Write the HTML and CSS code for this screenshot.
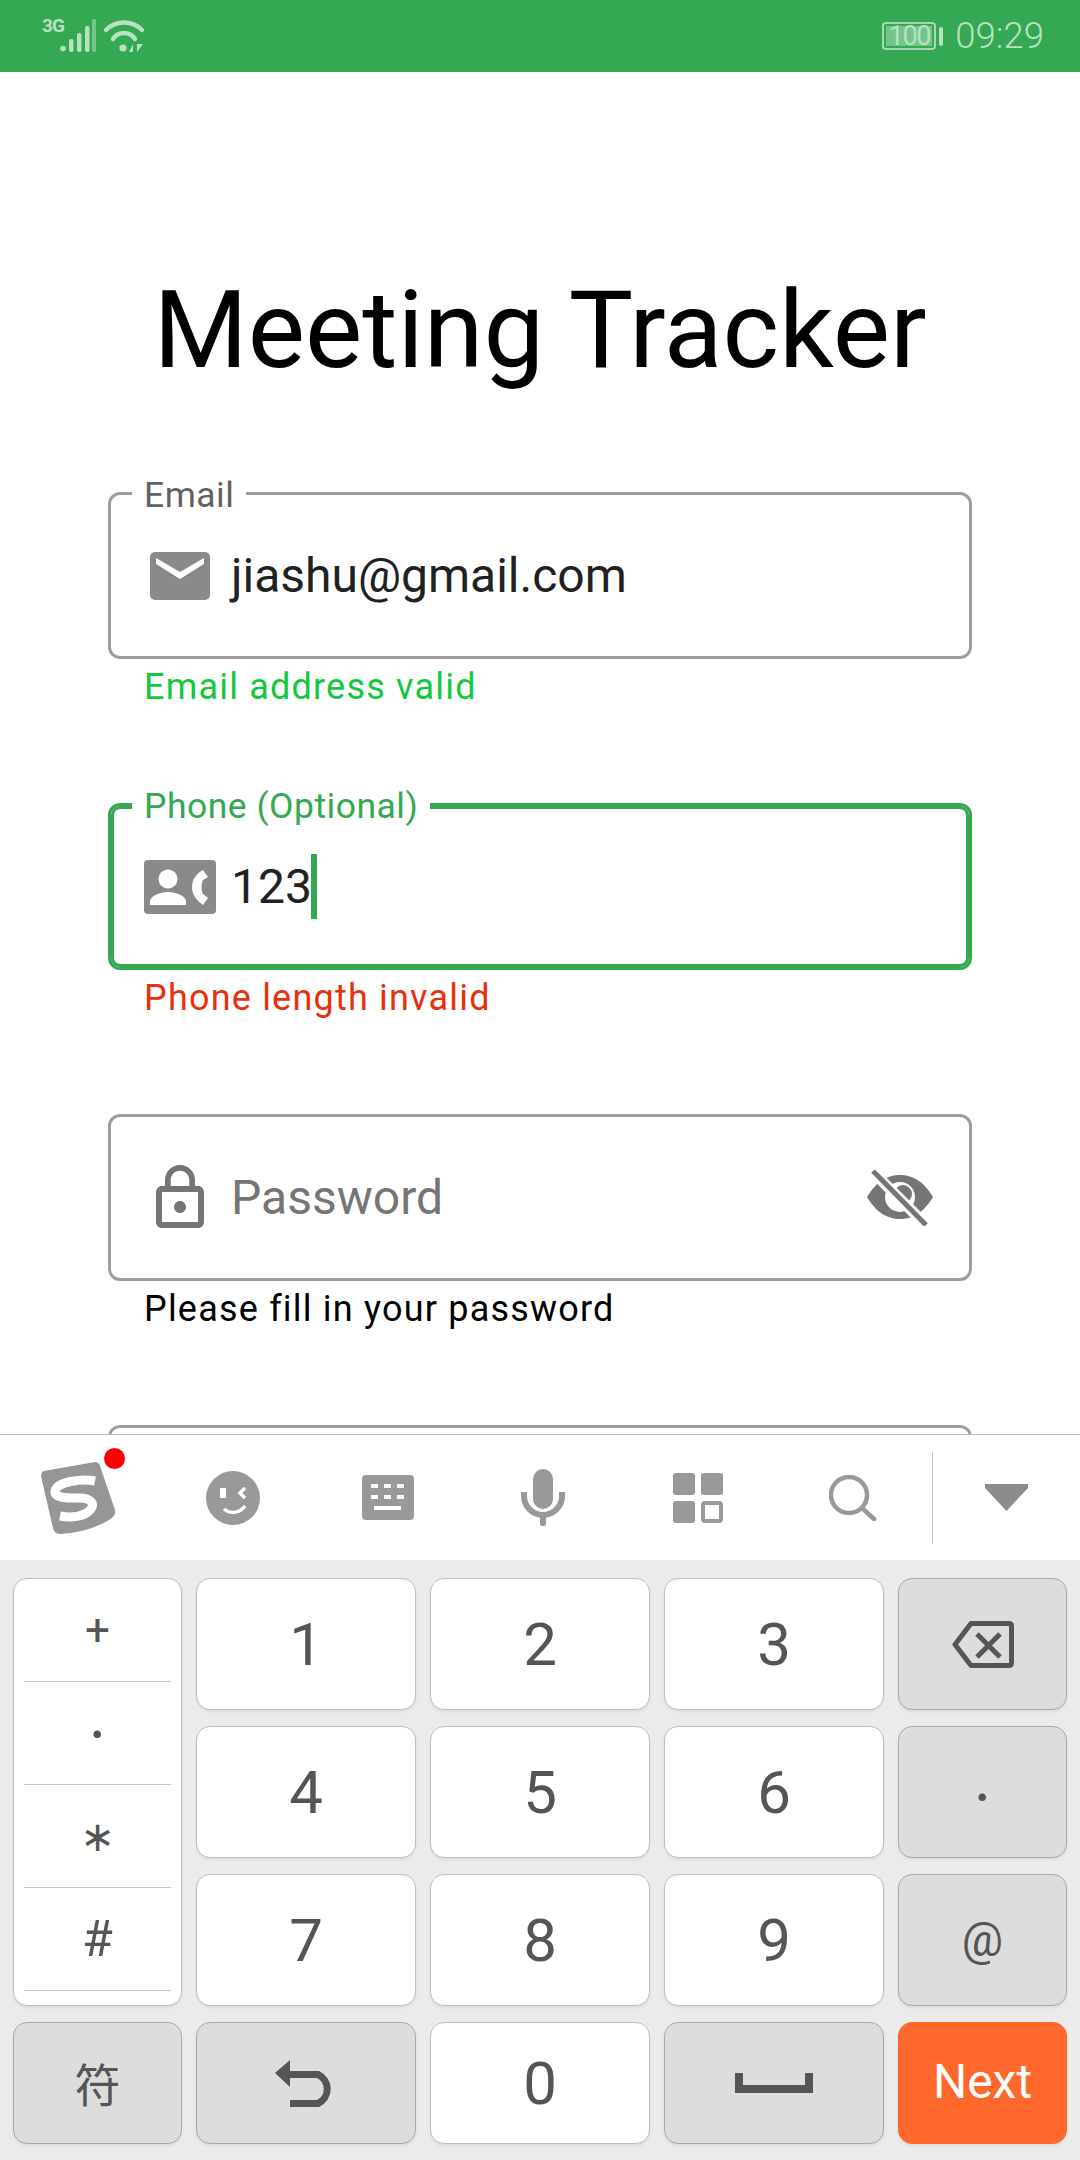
FILE: index.html
```html
<!DOCTYPE html>
<html>
<head>
    <title>Meeting Tracker</title>
    <link rel="stylesheet" href="styles.css">
</head>
<body>
    <div class="status-bar">
        <div class="status-left">
            <span class="network-type">3G</span>
            <svg class="signal-icon" width="36" height="34" viewBox="0 0 36 34">
                <circle cx="3" cy="29.5" r="2.8" fill="#b5e2c1"/>
                <rect x="9" y="20" width="4.5" height="13" rx="2" fill="#b5e2c1"/>
                <rect x="17" y="14" width="4.5" height="19" rx="2" fill="#b5e2c1"/>
                <rect x="25" y="7" width="4.5" height="26" rx="2" fill="#b5e2c1"/>
                <rect x="32" y="0" width="4.5" height="33" rx="2" fill="#75c58b"/>
            </svg>
            <svg class="wifi-icon" width="40" height="34" viewBox="0 0 40 34">
                <path d="M2 11 C12 1 28 1 38 11" fill="none" stroke="#b5e2c1" stroke-width="4.5" stroke-linecap="round"/>
                <path d="M9 20 C14 12 26 12 31 20" fill="none" stroke="#b5e2c1" stroke-width="4.5" stroke-linecap="round"/>
                <circle cx="19" cy="29" r="3.6" fill="#b5e2c1"/>
                <path d="M25 33 L29 25 V33Z M33 25 L39 25 L33 33Z" fill="#b5e2c1"/>
            </svg>
        </div>
        <div class="status-right">
            <div class="battery"><span class="battery-level">100</span></div>
            <div class="battery-nub"></div>
            <span class="clock">09:29</span>
        </div>
    </div>

    <div class="content">
        <h1>Meeting Tracker</h1>

        <div class="form-group">
            <div class="field">
                <span class="field-label">Email</span>
                <div class="field-icon">
                    <svg width="60" height="48" viewBox="0 0 60 48">
                        <rect width="60" height="48" rx="5" fill="#8a8a8a"/>
                        <path d="M6 6 L30 20 L54 6 V12 L30 27 L6 12Z" fill="#fff"/>
                    </svg>
                </div>
                <span class="field-value">jiashu@gmail.com</span>
            </div>
            <p class="helper helper-ok">Email address valid</p>
        </div>

        <div class="form-group">
            <div class="field field-focus">
                <span class="field-label">Phone (Optional)</span>
                <div class="field-icon">
                    <svg width="72" height="54" viewBox="0 0 72 54">
                        <rect width="72" height="54" rx="4" fill="#8a8a8a"/>
                        <circle cx="24" cy="19" r="9.5" fill="#fff"/>
                        <path d="M6 45 V42 C6 35 18 32 24 32 S42 35 42 42 V45Z" fill="#fff"/>
                        <path d="M59 10 L64 17 L59 20 C57 23 57 31 59 34 L64 38 L59 45 C52 40 48 34 48 27 C48 20 52 14 59 10Z" fill="#fff"/>
                    </svg>
                </div>
                <span class="field-value">123</span><span class="cursor"></span>
            </div>
            <p class="helper helper-error">Phone length invalid</p>
        </div>

        <div class="form-group">
            <div class="field">
                <div class="field-icon">
                    <svg width="72" height="66" viewBox="0 0 24 22">
                        <path fill="#757575" d="M12 16c1.1 0 2-.9 2-2s-.9-2-2-2-2 .9-2 2 .9 2 2 2zm6-9h-1V5c0-2.76-2.24-5-5-5S7 2.24 7 5v2H6c-1.1 0-2 .9-2 2v10c0 1.1.9 2 2 2h12c1.1 0 2-.9 2-2V9c0-1.1-.9-2-2-2zM8.9 5c0-1.71 1.39-3.1 3.1-3.1s3.1 1.39 3.1 3.1v2H8.9V5zM18 19H6V9h12v10z"/>
                    </svg>
                </div>
                <span class="field-value field-placeholder">Password</span>
                <svg class="eye-icon" width="66" height="56" viewBox="0 0 66 56">
                    <path d="M0 27 C10 10 22 5 33 5 S56 10 66 27 C56 44 44 49 33 49 S10 44 0 27Z" fill="#757575"/>
                    <circle cx="33" cy="27" r="15" fill="#fff"/>
                    <circle cx="36" cy="24" r="9" fill="#757575"/>
                    <path d="M3 -1 L57 53" stroke="#fff" stroke-width="11"/>
                    <path d="M6 1 L59 55" stroke="#757575" stroke-width="5"/>
                </svg>
            </div>
            <p class="helper">Please fill in your password</p>
        </div>

        <div class="form-group">
            <div class="field"></div>
        </div>
    </div>

    <div class="keyboard">
        <div class="toolbar">
            <div class="tool">
                <div class="logo-wrap">
                    <svg width="74" height="72" viewBox="0 0 74 72">
                        <path d="M3 9 L54 0 Q58 0 59 4 L74 48 Q75 54 68 58 Q48 70 20 72 Q13 72 12 66 L0 14 Q0 10 3 9Z" fill="#969696"/>
                        <path d="M54 19 C40 16 16 20 14 29 C13 37 30 36 38 36 C50 36 55 42 49 48 C43 55 30 56 19 54" fill="none" stroke="#fff" stroke-width="9"/>
                    </svg>
                    <span class="red-dot"></span>
                </div>
            </div>
            <div class="tool">
                <svg width="54" height="54" viewBox="0 0 54 54">
                    <circle cx="27" cy="27" r="27" fill="#999"/>
                    <rect x="14" y="17" width="6" height="10" fill="#fff"/>
                    <path d="M39 17 L34 22 L39 27" fill="none" stroke="#fff" stroke-width="3.5"/>
                    <path d="M18 38 C24 43 33 43 39 35" fill="none" stroke="#fff" stroke-width="3.5"/>
                </svg>
            </div>
            <div class="tool">
                <svg width="52" height="45" viewBox="0 0 52 45">
                    <rect width="52" height="45" rx="4" fill="#999"/>
                    <path d="M9 9h7v4H9z M22 9h7v4h-7z M35 9h7v4h-7z M9 20h7v4H9z M22 20h7v4h-7z M35 20h7v4h-7z M12 31h27v4H12z" fill="#fff"/>
                </svg>
            </div>
            <div class="tool">
                <svg width="44" height="57" viewBox="0 0 44 57">
                    <rect x="12" y="0" width="20" height="40" rx="10" fill="#999"/>
                    <path d="M3 23 V27 A19 19 0 0 0 41 27 V23" fill="none" stroke="#999" stroke-width="6"/>
                    <rect x="19" y="44" width="6" height="13" rx="2" fill="#999"/>
                </svg>
            </div>
            <div class="tool">
                <svg width="50" height="50" viewBox="0 0 50 50">
                    <rect width="22" height="22" rx="3" fill="#999"/>
                    <rect x="28" width="22" height="22" rx="3" fill="#999"/>
                    <rect y="28" width="22" height="22" rx="3" fill="#999"/>
                    <rect x="30" y="30" width="18" height="18" rx="2" fill="none" stroke="#999" stroke-width="4"/>
                </svg>
            </div>
            <div class="tool">
                <svg width="48" height="46" viewBox="0 0 48 46">
                    <circle cx="20" cy="20" r="18" fill="none" stroke="#999" stroke-width="4.5"/>
                    <path d="M33 33 L45 44" stroke="#999" stroke-width="4.5" stroke-linecap="round"/>
                </svg>
            </div>
            <div class="tool tool-last">
                <svg width="43" height="27" viewBox="0 0 43 27">
                    <path d="M0 0 H43 V4 L21.5 27 L0 4Z" fill="#8c8c8c"/>
                </svg>
            </div>
        </div>

        <div class="keys">
            <div class="key key-side">
                <div class="side-item">+</div>
                <div class="side-item side-dot">·</div>
                <div class="side-item side-star">∗</div>
                <div class="side-item side-hash">#</div>
            </div>
            <div class="key">1</div>
            <div class="key">2</div>
            <div class="key">3</div>
            <div class="key key-gray">
                <svg width="62" height="47" viewBox="0 0 62 47">
                    <path d="M19 2.5 H57 Q59.500 2.500 59.500 5 V42 Q59.500 44.500 57 44.500 H19 L3 23.500Z" fill="none" stroke="#555" stroke-width="5" stroke-linejoin="round"/>
                    <path d="M25 13 L48 36 M48 13 L25 36" stroke="#555" stroke-width="5"/>
                </svg>
            </div>
            <div class="key">4</div>
            <div class="key">5</div>
            <div class="key">6</div>
            <div class="key key-gray key-dot">·</div>
            <div class="key">7</div>
            <div class="key">8</div>
            <div class="key">9</div>
            <div class="key key-gray key-small">@</div>
            <div class="key key-gray key-symbol">符</div>
            <div class="key key-gray">
                <svg width="62" height="47" viewBox="0 0 62 47">
                    <path d="M15 0 V27 L0 13Z" fill="#555"/>
                    <path d="M15 14.500 H43 A16 16 0 0 1 43 43.500 H15" fill="none" stroke="#555" stroke-width="7"/>
                </svg>
            </div>
            <div class="key">0</div>
            <div class="key key-gray">
                <svg width="78" height="20" viewBox="0 0 78 20">
                    <path d="M0 0 H8 V12 H70 V0 H78 V20 H0Z" fill="#555"/>
                </svg>
            </div>
            <div class="key key-next">Next</div>
        </div>
    </div>
</body>
</html>
```

FILE: styles.css
```css
* {
    box-sizing: border-box;
}

body {
    font-family: 'Roboto', sans-serif;
    background-color: #ffffff;
    margin: 0;
    padding: 0;
    width: 1080px;
    height: 2160px;
    display: flex;
    flex-direction: column;
    overflow: hidden;
}

/* status bar */
.status-bar {
    height: 72px;
    flex: none;
    background-color: #34a853;
    display: flex;
    justify-content: space-between;
    align-items: flex-start;
    color: #b5e2c1;
}

.status-left {
    display: flex;
    align-items: flex-start;
    padding: 19px 0 0 42px;
}

.network-type {
    font-size: 19px;
    font-weight: 700;
    line-height: 14px;
    letter-spacing: -1px;
    width: 18px;
}

.wifi-icon {
    margin: 0 0 0 8px;
}

.status-right {
    display: flex;
    align-items: center;
    height: 72px;
    padding-right: 36px;
}

.battery {
    width: 54px;
    height: 28px;
    border: 2px solid #a4dab3;
    border-radius: 4px;
    padding: 2px;
    margin-right: 3px;
}

.battery-level {
    display: block;
    width: 46px;
    height: 20px;
    background-color: #75c58b;
    font-size: 27px;
    line-height: 20px;
    text-align: center;
    letter-spacing: -1.5px;
}

.battery-nub {
    width: 4px;
    height: 19px;
    background-color: #b5e2c1;
    border-radius: 2px;
    margin-right: 12px;
}

.clock {
    font-size: 36.5px;
    font-weight: 300;
    line-height: 72px;
}

/* form */
.content {
    flex: 1;
    min-height: 0;
    overflow: hidden;
    padding: 198px 108px 0;
}

h1 {
    margin: 0 0 102px;
    font-size: 108px;
    font-weight: 400;
    line-height: 120px;
    text-align: center;
    color: #000;
    white-space: nowrap;
}

.form-group {
    margin-bottom: 96px;
}

.field {
    position: relative;
    height: 167px;
    border: 3px solid #9e9e9e;
    border-radius: 12px;
    padding-left: 21px;
    display: flex;
    align-items: center;
}

.field-focus {
    border-color: #34a853;
    box-shadow: inset 0 0 0 3px #34a853;
}

.field-label {
    position: absolute;
    left: 21px;
    top: -24px;
    padding: 0 12px;
    background-color: #fff;
    font-size: 35.5px;
    line-height: 48px;
    letter-spacing: 0.5px;
    color: #616161;
}

.field-focus .field-label {
    color: #34a853;
}

.field-icon {
    width: 96px;
    margin-right: 3px;
    flex: none;
    display: flex;
    justify-content: center;
    align-items: center;
}

.field-value {
    font-size: 48px;
    line-height: 60px;
    color: #212121;
}

.field-placeholder {
    color: #757575;
}

.cursor {
    width: 6px;
    height: 65px;
    margin-left: -1px;
    background-color: #34a853;
}

.eye-icon {
    margin-left: auto;
    margin-right: 36px;
}

.helper {
    margin: 8px 0 0;
    padding-left: 36px;
    font-size: 36px;
    line-height: 40px;
    letter-spacing: 1.2px;
    color: #000;
}

.helper-ok {
    color: #12c83c;
}

.helper-error {
    color: #e8300e;
}

/* keyboard */
.keyboard {
    flex: none;
    height: 726px;
    background-color: #ebebeb;
}

.toolbar {
    height: 126px;
    background-color: #fff;
    border-top: 1px solid #bdbdbd;
    display: flex;
    align-items: center;
}

.tool {
    width: 155px;
    height: 92px;
    display: flex;
    align-items: center;
    justify-content: center;
}

.tool-last {
    width: 148px;
    margin-left: 2px;
    border-left: 1px solid #c4c4c4;
}

.logo-wrap {
    position: relative;
    height: 72px;
}

.red-dot {
    position: absolute;
    right: -10px;
    top: -14px;
    width: 21px;
    height: 21px;
    border-radius: 50%;
    background-color: #ff0000;
}

.keys {
    display: grid;
    grid-template-columns: 169px 220px 220px 220px 169px;
    grid-template-rows: 132px 132px 132px 122px;
    gap: 16px 14px;
    padding: 18px 13px 0;
}

.key {
    background-color: #fff;
    border: 1px solid #bdbdbd;
    border-radius: 14px;
    box-shadow: 0 2px 3px rgba(0, 0, 0, 0.06);
    display: flex;
    align-items: center;
    justify-content: center;
    font-size: 60px;
    color: #555;
}

.key-side {
    grid-row: span 3;
    flex-direction: column;
    justify-content: flex-start;
    padding: 0 10px;
}

.side-item {
    width: 100%;
    height: 103px;
    flex: none;
    border-bottom: 1px solid #c8c8c8;
    display: flex;
    align-items: center;
    justify-content: center;
    font-size: 44px;
}

.side-dot {
    font-size: 68px;
    padding-top: 5px;
}

.side-star {
    font-family: 'DejaVu Sans', sans-serif;
    font-size: 42px;
}

.side-hash {
    font-size: 50px;
}

.key-gray {
    background-color: #dddddd;
    border-color: #a8a8a8;
}

.key-small {
    font-size: 46px;
}

.key-dot {
    font-size: 68px;
    padding-top: 14px;
}

.key-symbol {
    font-family: 'Noto Sans CJK SC', sans-serif;
    font-size: 46px;
    padding-bottom: 3px;
}

.key-next {
    background-color: #ff682c;
    border-color: #ff682c;
    color: #fff;
    font-size: 48px;
    padding-bottom: 3px;
}
```
